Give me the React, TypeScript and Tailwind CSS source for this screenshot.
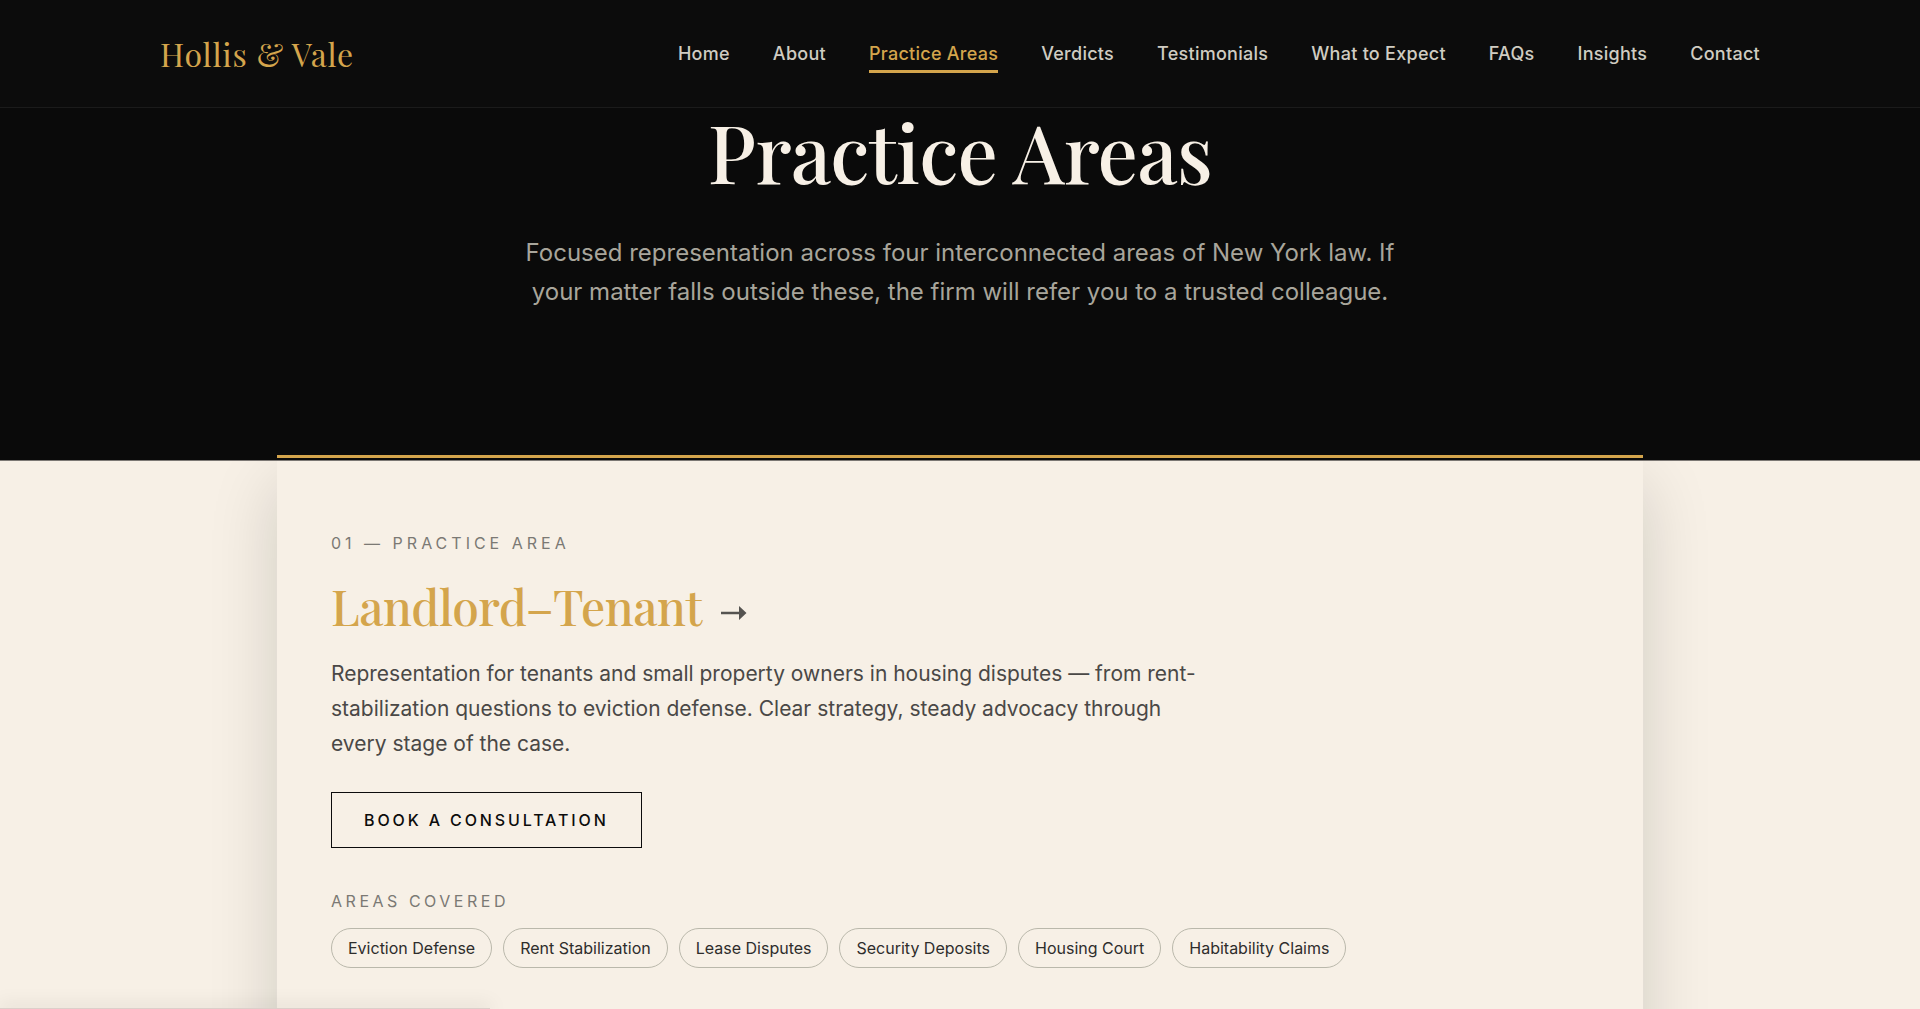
import React from 'react';
import clsx from 'clsx';

const navLinks = [
  { label: 'Home', href: '#home' },
  { label: 'About', href: '#about' },
  { label: 'Practice Areas', href: '#practice-areas' },
  { label: 'Verdicts', href: '#verdicts' },
  { label: 'Testimonials', href: '#testimonials' },
  { label: 'What to Expect', href: '#what-to-expect' },
  { label: 'FAQs', href: '#faqs' },
  { label: 'Insights', href: '#insights' },
  { label: 'Contact', href: '#contact' },
];

const landlordTenant = {
  number: '01',
  title: 'Landlord–Tenant',
  description:
    'Representation for tenants and small property owners in housing disputes — from rent-stabilization questions to eviction defense. Clear strategy, steady advocacy through every stage of the case.',
  areas: [
    'Eviction Defense',
    'Rent Stabilization',
    'Lease Disputes',
    'Security Deposits',
    'Housing Court',
    'Habitability Claims',
  ],
};

function Header() {
  return (
    <header className="border-b border-[#1b1b1b] bg-[#0c0c0c]">
      <div className="mx-auto flex h-[107px] max-w-[1600px] items-center justify-between">
        <a
          href="#home"
          className="font-['Playfair_Display',serif] text-[32px] leading-10 tracking-wide text-[#d4a54c]"
        >
          Hollis &amp; Vale
        </a>
        <nav className="flex items-center gap-[43px]">
          {navLinks.map((link) => {
            const active = link.label === 'Practice Areas';
            return (
              <a
                key={link.label}
                href={link.href}
                aria-current={active ? 'page' : undefined}
                className={clsx(
                  'border-b-3 pt-2 pb-1 text-lg leading-6 font-medium tracking-[0.015em] whitespace-nowrap',
                  active ? 'border-[#d4a54c] text-[#d4a54c]' : 'border-transparent text-[#d0ccc2]'
                )}
              >
                {link.label}
              </a>
            );
          })}
        </nav>
      </div>
    </header>
  );
}

function Hero() {
  return (
    <section className="border-b border-[#7c7874] bg-[#0a0a0a] px-6 pb-[149px] text-center">
      <h1 className="font-['Playfair_Display',serif] text-[80px] leading-[86px] font-medium tracking-[-0.01em] text-[#f7f0e6]">
        Practice Areas
      </h1>
      <p className="mx-auto mt-[39px] max-w-[896px] text-2xl leading-[39px] text-[#a8a59b]">
        Focused representation across four interconnected areas of New York law. If your matter falls
        outside these, the firm will refer you to a trusted colleague.
      </p>
    </section>
  );
}

function Arrow() {
  return (
    <svg width="26" height="14" viewBox="0 0 26 14" className="mt-3.5 text-[#555350]" aria-hidden="true">
      <path d="M0 5.800h18V0l7.500 7L18 14V8.200H0z" fill="currentColor" />
    </svg>
  );
}

function PracticeAreaCard({ area }: { area: typeof landlordTenant }) {
  return (
    <article className="relative mx-auto min-h-[720px] max-w-[1366px] bg-[#f7f0e6] px-[54px] pt-[70px] shadow-[0_24px_64px_rgba(10,20,10,0.16)]">
      <p className="text-base leading-6 tracking-[0.25em] text-[#7b7974] uppercase">
        {area.number} — Practice Area
      </p>
      <h2 className="mt-4">
        <a href="#landlord-tenant" className="flex items-center gap-[19px]">
          <span className="font-['Playfair_Display',serif] text-5xl leading-[70px] font-medium tracking-[-0.01em] text-[#d4a54c]">
            {area.title}
          </span>
          <Arrow />
        </a>
      </h2>
      <p className="mt-[15px] max-w-[880px] text-[21px] leading-[35px] text-[#4a4846]">{area.description}</p>
      <a
        href="#contact"
        className="mt-[31px] inline-flex h-14 items-center border border-[#0c0c0c] px-8 text-base leading-6 font-medium tracking-[0.18em] text-[#0c0c0c] uppercase"
      >
        Book a consultation
      </a>
      <h3 className="mt-[41px] text-base leading-6 tracking-[0.22em] text-[#7b7974] uppercase">Areas covered</h3>
      <ul className="mt-[15px] flex flex-wrap gap-[11px]">
        {area.areas.map((name) => (
          <li
            key={name}
            className="flex h-10 items-center rounded-full border border-[#bab8ab] px-4 text-base text-[#2e2d2c]"
          >
            {name}
          </li>
        ))}
      </ul>
    </article>
  );
}

export default function App() {
  return (
    <div className="h-screen overflow-hidden bg-[#f7f0e6] font-[Inter,sans-serif]">
      <Header />
      <main>
        <Hero />
        <section className="relative">
          {/* Gold rule over the top of the card */}
          <div className="absolute inset-x-0 -top-1.5 z-10 mx-auto h-[3px] max-w-[1366px] bg-[#d4a54c]" />
          <div className="overflow-hidden">
            <PracticeAreaCard area={landlordTenant} />
          </div>
        </section>
      </main>
      {/* Edge of the bottom-left notice */}
      <div className="fixed bottom-0 left-0 h-px w-[490px] bg-[#dccfca] shadow-[0_0_18px_1px_rgba(10,20,10,0.25)]" />
    </div>
  );
}
